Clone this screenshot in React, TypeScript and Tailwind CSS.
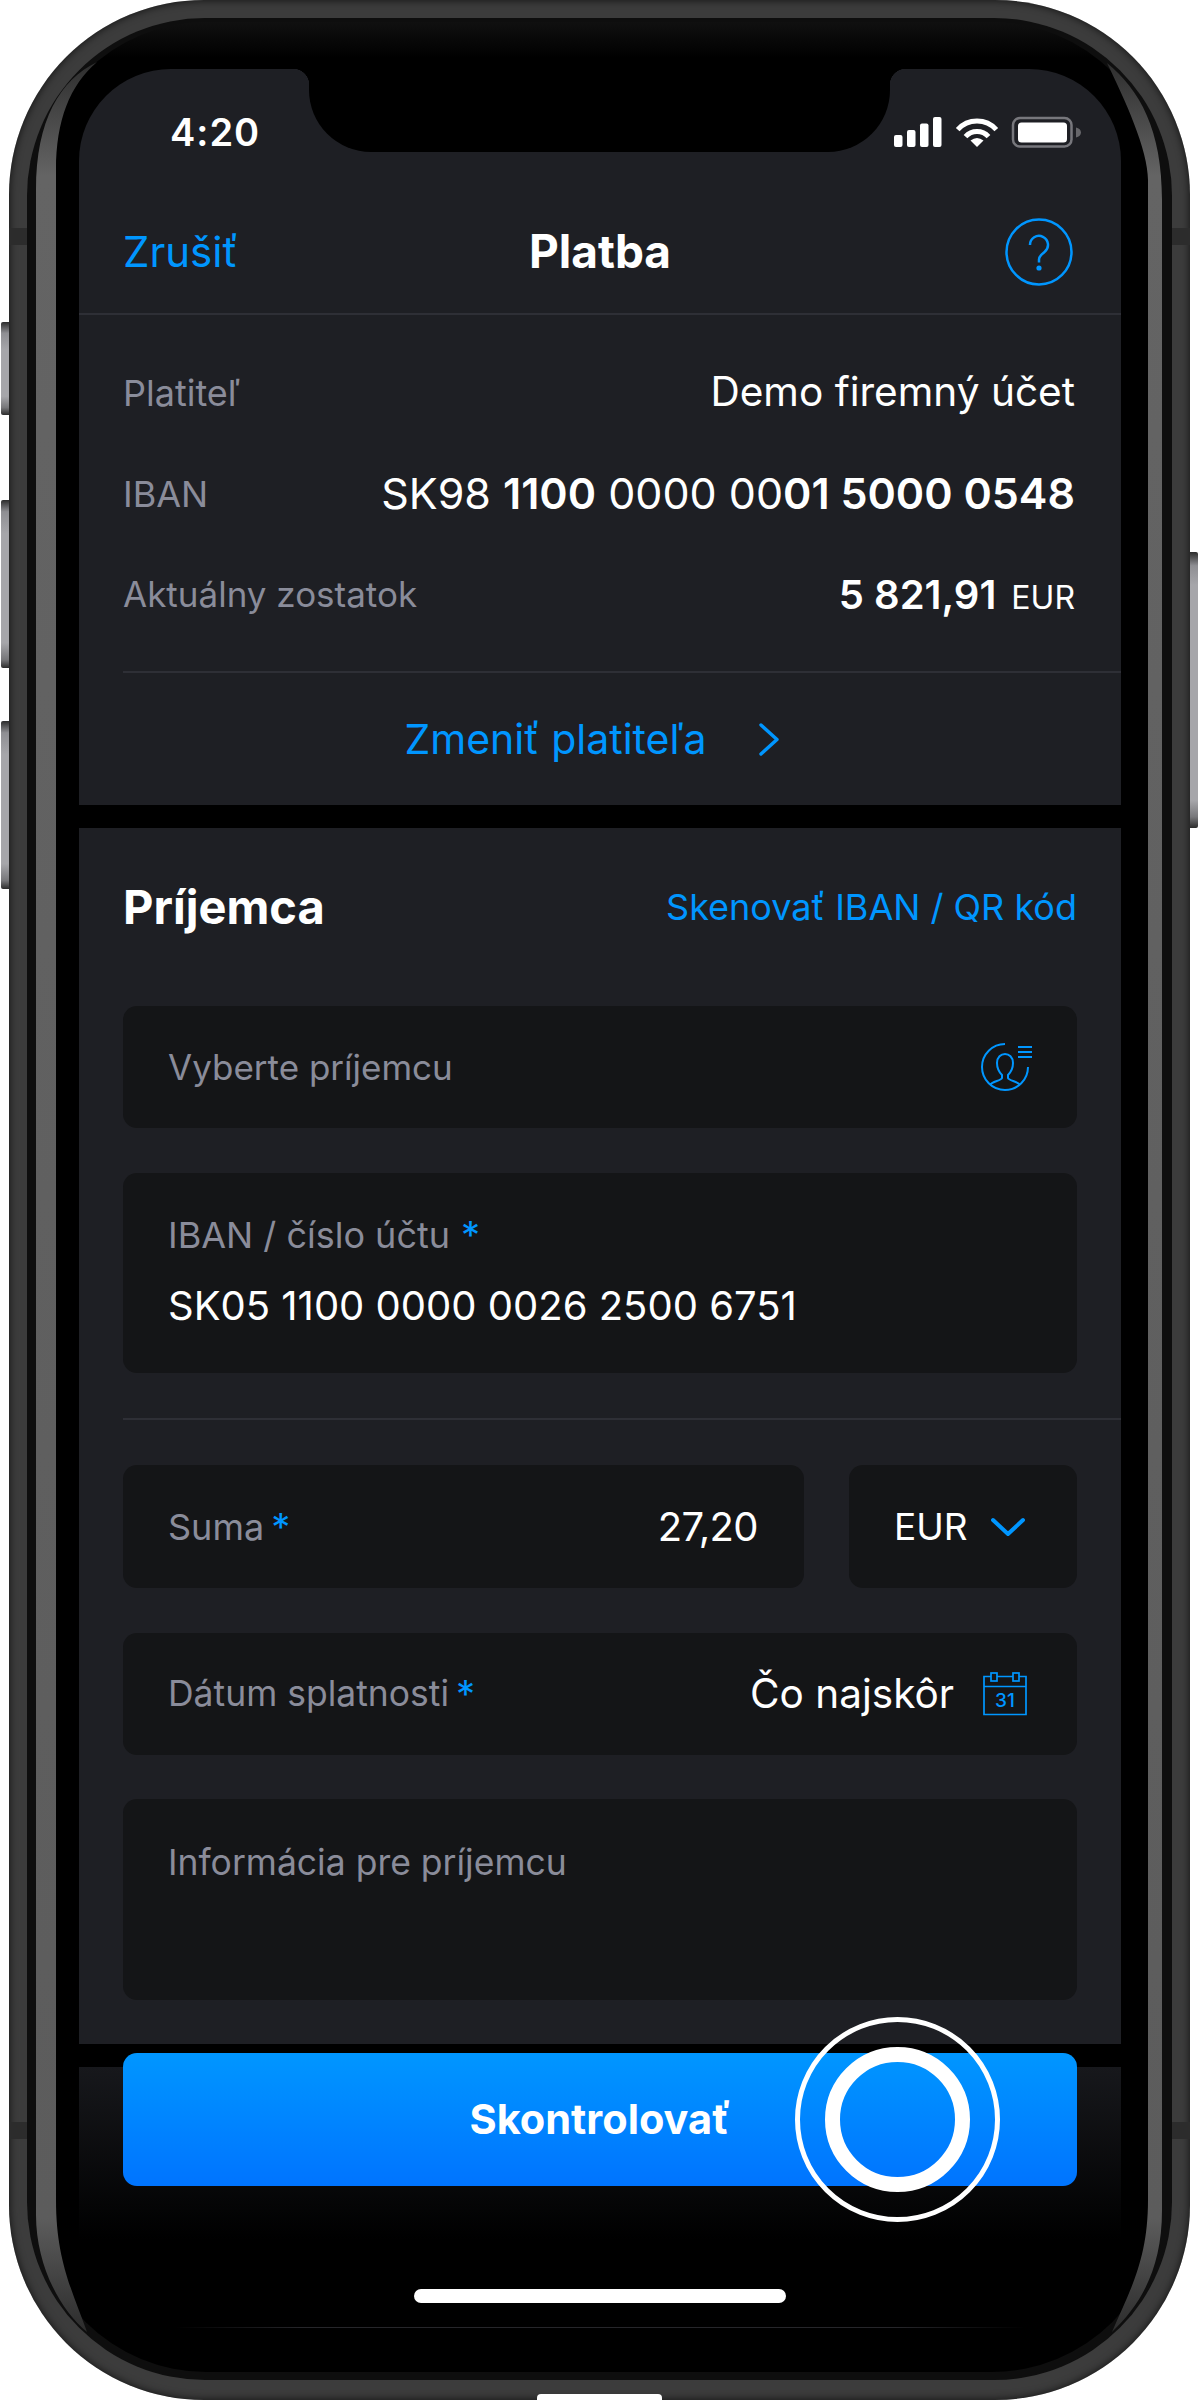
import React from "react";

const Star = ({ gap }: { gap: string }) => <span className={`text-[#0096ff] text-[38px] ${gap}`}>*</span>;

function StatusIcons() {
  return (
    <svg width="190" height="35" viewBox="0 0 190 35" fill="none">
      <rect x="1" y="20" width="8.5" height="12" rx="2" fill="#fff" />
      <rect x="14" y="15" width="8.5" height="17" rx="2" fill="#fff" />
      <rect x="27" y="8.5" width="8.5" height="23.5" rx="2" fill="#fff" />
      <rect x="40" y="2" width="8.5" height="30" rx="2" fill="#fff" />
      <path d="M64.7 14.6A26 26 0 0 1 103.3 14.6" stroke="#fff" strokeWidth="5" />
      <path d="M72.5 21.6A15.5 15.5 0 0 1 95.5 21.6" stroke="#fff" strokeWidth="5" />
      <path d="M84 32L77.5 25.5Q84 20.5 90.5 25.5Z" fill="#fff" />
      <rect x="120" y="3" width="58.5" height="28.5" rx="7" stroke="#77777c" strokeWidth="2.5" />
      <rect x="125" y="7.5" width="49" height="20" rx="3.5" fill="#fff" />
      <path d="M183 12.5C186 13 188 15 188 17.5C188 20 186 22 183 22.5Z" fill="#66666a" />
    </svg>
  );
}

function HelpIcon() {
  return (
    <svg width="68" height="68" viewBox="0 0 68 68" fill="none" stroke="#0096ff" strokeWidth="2.5">
      <circle cx="34" cy="34" r="32.5" />
      <path d="M25 27a9 9 0 1 1 14.5 7c-3 2.5-5.5 4-5.5 7.5v3" />
      <circle cx="34" cy="50" r="2.6" fill="#0096ff" stroke="none" />
    </svg>
  );
}

function PersonIcon() {
  return (
    <svg width="60" height="60" viewBox="0 0 60 60" fill="none" stroke="#0096ff" strokeWidth="2">
      <path d="M33 7A23 23 0 1 0 56 30" />
      <path d="M46 10H60M46 15H60M46 20H60" />
      <path d="M18 48C20 44 29 44 30 41V38C26 34 25 30 25 26C25 20 29 17 33 17C37 17 41 20 41 26C41 30 40 34 36 38V41C37 44 46 44 48 48" />
    </svg>
  );
}

function CalendarIcon() {
  return (
    <svg width="44" height="44" viewBox="0 0 44 44" fill="none" stroke="#0096ff" strokeWidth="1.7">
      <path d="M1 4.5H43V42.5H1ZM1 14.5H43" />
      <rect x="8" y="1" width="6" height="8" fill="#141517" />
      <rect x="30" y="1" width="6" height="8" fill="#141517" />
      <text x="22" y="35" textAnchor="middle" fontSize="19" fontWeight="500" fill="#0096ff" stroke="none" fontFamily="Inter, sans-serif">31</text>
    </svg>
  );
}

function Bezel() {
  return (
    <svg className="absolute left-0 top-0 pointer-events-none" width="1199" height="2400" viewBox="0 0 1199 2400" fill="none">
      <defs>
        <linearGradient id="band" gradientUnits="userSpaceOnUse" x1="0" y1="62" x2="0" y2="2332">
          <stop offset="0" stopColor="#2e2e2e" />
          <stop offset="0.05" stopColor="#646464" />
          <stop offset="0.95" stopColor="#5c5c5c" />
          <stop offset="1" stopColor="#2c2c2c" />
        </linearGradient>
      </defs>
      <path d="M97 62C60 80 36 120 36 190L36 2215C36 2265 60 2310 87 2332C72 2290 56 2260 56 2200L56 170C56 120 70 85 97 62Z" fill="url(#band)" />
      <path d="M1107 63C1140 90 1162 130 1162 200L1162 2210C1162 2270 1140 2305 1112 2332C1130 2290 1148 2260 1148 2200L1148 180C1148 150 1125 100 1107 63Z" fill="url(#band)" />
    </svg>
  );
}

export default function App() {
  return (
    <div className="relative w-[1199px] h-[2400px] overflow-hidden bg-white font-['Inter',sans-serif] text-white">
      {/* side buttons */}
      <div className="absolute left-[1px] top-[322px] w-[9px] h-[93px] rounded-l-[2px] bg-[linear-gradient(#2c2c2c,#8f8f93_12%,#a6a6aa_30%,#a6a6aa_80%,#77777a_92%,#2c2c2c)]" />
      <div className="absolute left-[1px] top-[500px] w-[9px] h-[168px] rounded-l-[2px] bg-[linear-gradient(#2c2c2c,#8f8f93_7%,#a6a6aa_20%,#a6a6aa_85%,#77777a_95%,#2c2c2c)]" />
      <div className="absolute left-[1px] top-[721px] w-[9px] h-[168px] rounded-l-[2px] bg-[linear-gradient(#2c2c2c,#8f8f93_7%,#a6a6aa_20%,#a6a6aa_85%,#77777a_95%,#2c2c2c)]" />
      <div className="absolute left-[1189px] top-[552px] w-[9px] h-[276px] rounded-r-[2px] bg-[linear-gradient(#2c2c2c,#8f8f93_5%,#a6a6aa_12%,#a6a6aa_90%,#77777a_96%,#2c2c2c)]" />

      {/* phone */}
      <div className="relative ml-[9px] w-[1181px] h-[2400px] rounded-[195px] bg-[#3c3c3c] pl-[18px] pr-[18px] pt-[18px] pb-[20px] shadow-[inset_0_0_8px_rgba(0,0,0,0.75)]">
        <div className="h-full rounded-[178px] bg-[#0e0e0e] pl-[9px] pr-[10px] pt-[4px] pb-[8px]">
          <div className="h-full rounded-[170px] bg-[linear-gradient(#101010,#000_36px)] pl-[43px] pr-[41px] pt-[47px] overflow-hidden">
            <div className="relative flex flex-col w-[1042px]">
              {/* top card */}
              <section className="h-[736px] rounded-t-[92px] bg-[#1e1f24]">
                <div className="flex h-[126px] items-center justify-between pl-[91px] pr-[38px]">
                  <span className="text-[38px] font-semibold tracking-[1px]">4:20</span>
                  <StatusIcons />
                </div>
                <div className="relative flex h-[118px] items-center justify-between pl-[44px] pr-[48px] pb-[5px]">
                  <span className="text-[42px] text-[#0096ff]">Zrušiť</span>
                  <span className="absolute left-0 right-0 text-center text-[46px] font-bold">Platba</span>
                  <HelpIcon />
                </div>
                <div className="h-[2px] bg-[#2e2f36]" />
                <div className="pt-[27px] pl-[44px] pr-[46px]">
                  <div className="flex h-[101px] items-center justify-between">
                    <span className="text-[36px] text-[#8a8c9a]">Platiteľ</span>
                    <span className="text-[40.6px]">Demo firemný účet</span>
                  </div>
                  <div className="flex h-[101px] items-center justify-between">
                    <span className="text-[36px] text-[#8a8c9a]">IBAN</span>
                    <span className="text-[43px]">
                      SK98 <b className="font-semibold">1100</b> 0000 00<b className="font-semibold">01 5000 0548</b>
                    </span>
                  </div>
                  <div className="flex h-[101px] items-center justify-between">
                    <span className="text-[35px] text-[#8a8c9a]">Aktuálny zostatok</span>
                    <span className="flex items-baseline gap-[15px] text-[40px] font-semibold">
                      5 821,91<span className="text-[32px] font-normal">EUR</span>
                    </span>
                  </div>
                </div>
                <div className="mt-[26px] ml-[44px] h-[2px] bg-[#2e2f36]" />
                <div className="flex h-[133px] items-center justify-center gap-[53px] pr-[16px] text-[#0096ff]">
                  <span className="text-[41px]">Zmeniť platiteľa</span>
                  <svg width="20" height="33" viewBox="0 0 20 33" fill="none" stroke="#0096ff" strokeWidth="3.4" strokeLinecap="round" strokeLinejoin="round">
                    <path d="M2 2L18 16.5L2 31" />
                  </svg>
                </div>
              </section>

              {/* form card */}
              <section className="mt-[23px] h-[1216px] bg-[#1e1f24] pt-[48px] px-[44px]">
                <div className="flex h-[62px] items-center justify-between">
                  <span className="text-[47px] font-bold">Príjemca</span>
                  <span className="text-[36px] text-[#0096ff]">Skenovať IBAN / QR kód</span>
                </div>
                <div className="mt-[68px] flex h-[122px] items-center justify-between rounded-[14px] bg-[#141517] px-[45px]">
                  <span className="text-[35px] text-[#8a8c9a]">Vyberte príjemcu</span>
                  <PersonIcon />
                </div>
                <div className="mt-[45px] h-[200px] rounded-[14px] bg-[#141517] px-[45px] pt-[38px]">
                  <div className="flex h-[48px] text-[36px] leading-[48px] text-[#8a8c9a]">IBAN / číslo účtu<Star gap="ml-[11px]" /></div>
                  <div className="mt-[23px] h-[48px] text-[40px] leading-[48px]">SK05 1100 0000 0026 2500 6751</div>
                </div>
                <div className="mt-[45px] -mr-[44px] h-[2px] bg-[#2e2f36]" />
                <div className="mt-[45px] flex gap-[45px]">
                  <div className="flex h-[123px] w-[681px] items-center justify-between rounded-[14px] bg-[#141517] pl-[45px] pr-[46px]">
                    <span className="flex text-[36px] leading-[48px] text-[#8a8c9a]">Suma<Star gap="ml-[7px]" /></span>
                    <span className="text-[40px] tracking-[-0.6px]">27,20</span>
                  </div>
                  <div className="flex h-[123px] w-[228px] items-center justify-between rounded-[14px] bg-[#141517] pl-[45px] pr-[52px]">
                    <span className="text-[37px]">EUR</span>
                    <svg width="34" height="20" viewBox="0 0 34 20" fill="none" stroke="#0096ff" strokeWidth="4" strokeLinecap="round" strokeLinejoin="round">
                      <path d="M2 3L17 17L32 3" />
                    </svg>
                  </div>
                </div>
                <div className="mt-[45px] flex h-[122px] items-center justify-between rounded-[14px] bg-[#141517] pl-[45px] pr-[50px]">
                  <span className="flex text-[35.5px] leading-[48px] text-[#8a8c9a]">Dátum splatnosti<Star gap="ml-[7px]" /></span>
                  <span className="flex items-center gap-[29px] text-[40.5px]">Čo najskôr <CalendarIcon /></span>
                </div>
                <div className="mt-[44px] h-[201px] rounded-[14px] bg-[#141517] px-[45px] pt-[40px]">
                  <div className="h-[48px] text-[35.5px] leading-[48px] text-[#8a8c9a]">Informácia pre príjemcu</div>
                </div>
              </section>

              {/* footer */}
              <div className="mt-[23px] h-[173px] bg-[linear-gradient(#17181c,#000)] px-[44px]">
                <div className="-mt-[14px] flex h-[133px] items-center justify-center rounded-[14px] bg-[linear-gradient(#0096ff,#0074ff)] text-[41.5px] font-bold">
                  Skontrolovať
                </div>
              </div>
              <div className="mx-auto mt-[49px] h-[14px] w-[372px] rounded-full bg-white" />
              <div className="mx-[96px] mt-[24px] h-[1px] bg-[linear-gradient(90deg,transparent,#26262a_15%,#26262a_85%,transparent)]" />
            </div>
          </div>
        </div>

        {/* notch */}
        <div className="absolute left-[300px] top-[47px] h-[105px] w-[581px]">
          <div className="absolute left-0 top-[22px] h-[83px] w-full rounded-b-[62px] bg-black" />
          <div className="absolute left-0 top-[22px] -ml-[16px] h-[16px] w-[16px] bg-[radial-gradient(circle_at_0_100%,transparent_16px,#000_16.5px)]" />
          <div className="absolute right-0 top-[22px] -mr-[16px] h-[16px] w-[16px] bg-[radial-gradient(circle_at_100%_100%,transparent_16px,#000_16.5px)]" />
        </div>

        {/* antenna bands */}
        <div className="absolute left-0 top-[228px] h-[17px] w-[18px] bg-[#2c2c2c]" />
        <div className="absolute left-0 top-[2122px] h-[17px] w-[18px] bg-[#2c2c2c]" />
        <div className="absolute right-0 top-[228px] h-[17px] w-[18px] bg-[#2c2c2c]" />
        <div className="absolute right-0 top-[2122px] h-[17px] w-[18px] bg-[#2c2c2c]" />
      </div>

      <Bezel />

      {/* speaker slot */}
      <div className="absolute left-[537px] top-[2394px] h-[6px] w-[125px] rounded-t-[4px] bg-white" />

      {/* touch indicator */}
      <div className="absolute left-[795px] top-[2017px] h-[205px] w-[205px] rounded-full border-[5px] border-white" />
      <div className="absolute left-[825px] top-[2047px] h-[145px] w-[145px] rounded-full border-[15px] border-white" />
    </div>
  );
}
